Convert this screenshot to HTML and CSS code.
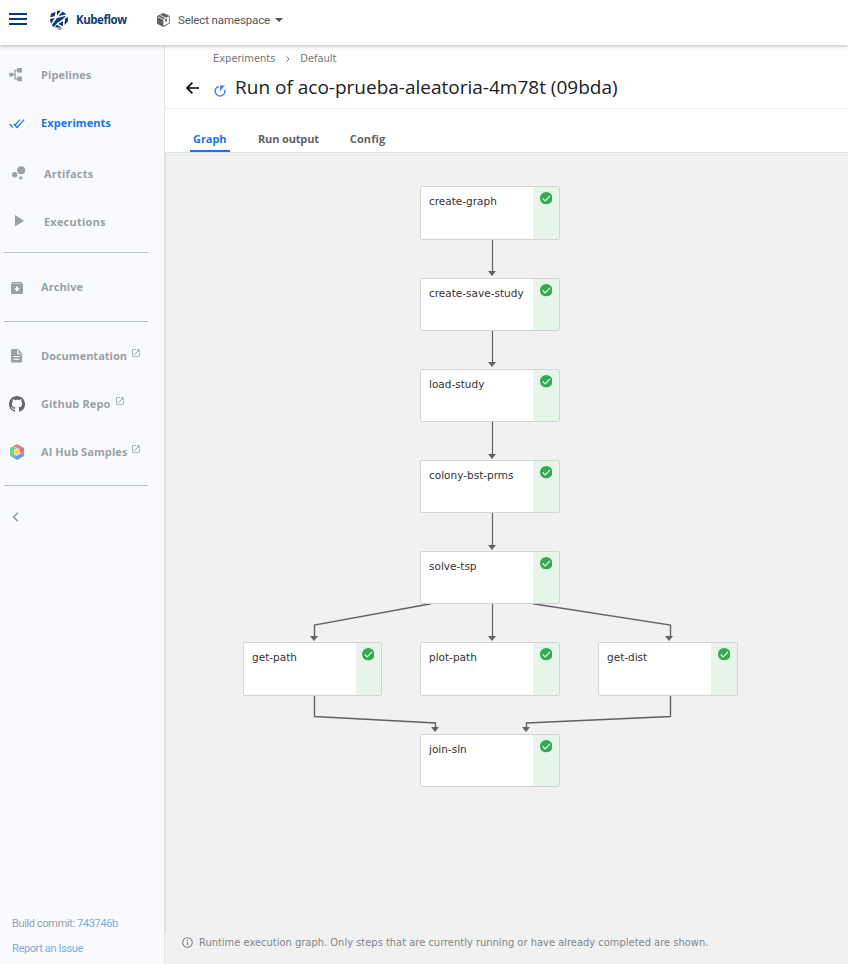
FILE: index.html
```html
<!DOCTYPE html>
<html lang="en">
<head>
<meta charset="utf-8">
<title>Kubeflow Pipelines</title>
<link rel="stylesheet" href="styles.css">
</head>
<body>
<svg class="defs" width="0" height="0">
  <symbol id="check" viewBox="0 0 12 12"><circle cx="6" cy="6" r="6" fill="#34a853"/><path d="M2.6 6.2 5 8.5 9.6 3.7" fill="none" stroke="#e6f4ea" stroke-width="1.2"/></symbol>
  <symbol id="open" viewBox="0 0 24 24"><path fill="currentColor" d="M19 19H5V5h7V3H3v18h18v-9h-2v7zM14 3v2h3.6l-9.800 9.800 1.400 1.400L19 6.400V10h2V3h-7z"/></symbol>
</svg>
<header class="topbar">
  <svg class="menu" width="18" height="12" viewBox="0 0 18 12"><path d="M0 1h18M0 6h18M0 11h18" stroke="#073c78" stroke-width="1.8"/></svg>
  <svg class="logo" width="20" height="20" viewBox="0 0 20 20" fill="#0b3d78"><path d="M2 3.800 6.500 1.700 5.800 6 1.200 7.500zM8 .7 12 .5 8 5.500zM13.500 1.500 17.500 4.200 9.500 6.200zM.5 9.500 5.800 7.800 2.200 13.800zM8 8 17.200 5.800 13.500 9.500 8.500 12.700 4.800 17 2.800 15.200zM16 8.500 18.800 7 19 11.500 15.500 15zM9.300 14 14 11v5.200zM7.500 14.800 12.800 17.500 6 17.500zM8 18.500H13.500L10.500 19.700z"/></svg>
  <span class="brand">Kubeflow</span>
  <svg class="cube" width="13" height="14" viewBox="0 0 13 14"><path fill="#616161" d="M6.300 0 12.700 3v7.600L6.500 14 0 10.700V3z"/><path d="M6.400 6.700 11.900 4v6.100l-5.500 2.900z" fill="#fff"/><path d="M.8 3.600 6.400 6.500 12 3.600M3.200 2.200l5.800 3" fill="none" stroke="#fff" stroke-width=".8"/><path d="M8 6.500 10 5.400v2.700l-2 1z" fill="#616161"/></svg>
  <span class="ns">Select namespace</span>
  <i class="caret"></i>
</header>
<div class="shell">
  <nav class="side">
    <a class="item"><svg width="14" height="14" viewBox="0 0 14 14"><g fill="#9aa0a6"><circle cx="2.200" cy="6.600" r="2.200"/><path d="M8.200 0H13v4.600H8.200zM8.200 8.600H13v4.600H8.200z"/></g><path d="M3 6.600h3M9 2.300H6v8.600h3" fill="none" stroke="#9aa0a6" stroke-width="1.300"/></svg><span>Pipelines</span></a>
    <a class="item on"><svg width="16" height="10" viewBox="0 0 16 10"><path d="M.6 5 4 8.600M4.800 5 8 8.500 15.200.7M11 .7 6.200 5.800" fill="none" stroke="#1a73e8" stroke-width="1.200"/></svg><span>Experiments</span></a>
    <a class="item in art"><svg width="14" height="14" viewBox="0 0 14 14" fill="#9aa0a6"><circle cx="9.200" cy="4.300" r="4"/><circle cx="2.700" cy="8.800" r="2.700"/><circle cx="8.700" cy="11.900" r="1.600"/></svg><span>Artifacts</span></a>
    <a class="item in exe"><svg width="10" height="12" viewBox="0 0 10 12"><path d="M0 0 9.200 5.700 0 11.400z" fill="#9aa0a6"/></svg><span>Executions</span></a>
    <hr>
    <a class="item arc"><svg width="12" height="12" viewBox="0 0 12 12"><path fill="#9aa0a6" d="M1.500 0h9L12 2v8.600q0 1.400-1.400 1.400H1.400Q0 12 0 10.600V2z"/><path d="M1.500 1.500h9" stroke="#d6d9dc" stroke-width=".7"/><path fill="#fff" d="M5 4.500h2v1.700h2L6 9.400 3 6.200h2z"/></svg><span>Archive</span></a>
    <hr>
    <a class="item doc"><svg width="12" height="14" viewBox="0 0 12 14"><path fill="#9aa0a6" d="M1.400 0H7l4.200 4.200v8q0 1.400-1.400 1.400H1.400Q0 13.600 0 12.200V1.400Q0 0 1.400 0z"/><path d="M6.600 1v3.700h3.700M2.500 7.500h6.200M2.500 10.300h6.200" stroke="#fff" fill="none" stroke-width="1.100"/></svg><span>Documentation</span><svg class="ext"><use href="#open"/></svg></a>
    <a class="item git"><svg width="16" height="16" viewBox="0 0 16 16"><path fill="#666" d="M8 0C3.580 0 0 3.580 0 8c0 3.540 2.290 6.530 5.470 7.590.4.070.55-.17.55-.38 0-.19-.01-.82-.01-1.490-2.010.37-2.530-.49-2.690-.94-.09-.23-.48-.94-.82-1.130-.28-.15-.68-.52-.01-.53.63-.01 1.080.58 1.230.82.72 1.210 1.870.87 2.330.66.07-.52.28-.87.51-1.070-1.780-.2-3.640-.89-3.640-3.950 0-.87.31-1.590.82-2.150-.08-.2-.36-1.020.08-2.120 0 0 .67-.21 2.200.82.64-.18 1.320-.27 2-.27s1.360.09 2 .27c1.530-1.040 2.200-.82 2.200-.82.44 1.100.16 1.920.08 2.120.51.56.82 1.270.82 2.150 0 3.070-1.870 3.750-3.650 3.950.29.25.54.73.54 1.480 0 1.070-.01 1.930-.01 2.200 0 .21.15.46.55.38A8.010 8.010 0 0 0 16 8c0-4.420-3.580-8-8-8z"/></svg><span>Github Repo</span><svg class="ext"><use href="#open"/></svg></a>
    <a class="item hub"><svg width="14" height="16" viewBox="0 0 14 16"><path fill="#ee8080" d="M2.500 2.500 7 0l7 4v4l-4-2-3-2z"/><path fill="#7bc796" d="M2.500 2.500 7 4.500 4 6v4l3 2-3 2L0 12V4z"/><path fill="#669df6" d="M14 8v4l-7 4-4-2.400 4-2 3-1.600z"/><path fill="#ee6767" d="m9.500 5 4.500-.8V8l-3.500 1.500z"/><path fill="#fcd766" d="m7 4.800 2.800 1.600v3.200L7 11.200 4.200 9.600V6.400z"/></svg><span>AI Hub Samples</span><svg class="ext"><use href="#open"/></svg></a>
    <hr class="last">
    <svg class="collapse" width="7" height="10" viewBox="0 0 7 10"><path d="M5.800.8 1.600 5l4.200 4.200" fill="none" stroke="#8d9297" stroke-width="1.500"/></svg>
    <div class="build"><p>Build commit: <a>743746b</a></p><p><a>Report an Issue</a></p></div>
  </nav>
  <main>
    <div class="crumbs"><span>Experiments</span><svg width="4" height="6" viewBox="0 0 4 6"><path d="m.6.5 2.500 2.500L.6 5.500" fill="none" stroke="#757575"/></svg><span>Default</span></div>
    <div class="title">
      <svg class="back" width="13" height="12" viewBox="0 0 13 12"><path d="M13 6H1.200M6.400.6 1 6l5.400 5.400" fill="none" stroke="#000" stroke-width="1.600"/></svg>
      <svg class="spin" width="12" height="12" viewBox="0 0 12 12"><path d="M4.600 1.500A4.800 4.800 0 1 0 10.700 5" fill="none" stroke="#4285f4" stroke-width="1.600"/><path d="M6 .6h5L9.300 2.300 7.300 4.600v1.200H6z" fill="#4285f4"/></svg>
      <h1>Run of aco-prueba-aleatoria-4m78t (09bda)</h1>
    </div>
    <div class="tabs"><a class="active"><span>Graph</span></a><a><span>Run output</span></a><a class="cfg"><span>Config</span></a></div>
    <section class="canvas">
      <svg class="edges" width="683" height="811" viewBox="165 153 683 811">
        <g fill="none" stroke="#5f6368" stroke-width="1.200">
          <path d="M492.500 240v33M492.500 331v33M492.500 422v33M492.500 513v33M492.500 604v34"/>
          <path d="M431 603.700 314.500 625v13M533 603.700 670.500 625v13M314.500 696v20.500L435.500 723v5M670.500 696v20.500L526.500 723v5" stroke-width="1.400"/>
        </g>
        <path fill="#5f6368" d="M488 271h8l-4 5zM488 362h8l-4 5zM488 454h8l-4 5zM488 545h8l-4 5zM488 636h8l-4 5zM310 636h8l-4 5zM665 636h8l-4 5zM431 727h8l-4 5zM522 727h8l-4 5z"/>
      </svg>
      <div class="node n1"><span>create-graph</span><i><svg><use href="#check"/></svg></i></div>
      <div class="node n2"><span>create-save-study</span><i><svg><use href="#check"/></svg></i></div>
      <div class="node n3"><span>load-study</span><i><svg><use href="#check"/></svg></i></div>
      <div class="node n4"><span>colony-bst-prms</span><i><svg><use href="#check"/></svg></i></div>
      <div class="node n5"><span>solve-tsp</span><i><svg><use href="#check"/></svg></i></div>
      <div class="node n6"><span>get-path</span><i><svg><use href="#check"/></svg></i></div>
      <div class="node n7"><span>plot-path</span><i><svg><use href="#check"/></svg></i></div>
      <div class="node n8"><span>get-dist</span><i><svg><use href="#check"/></svg></i></div>
      <div class="node n9"><span>join-sln</span><i><svg><use href="#check"/></svg></i></div>
      <div class="note"><svg width="11" height="11" viewBox="0 0 11 11"><circle cx="5.500" cy="5.500" r="4.800" fill="none" stroke="#80868b" stroke-width="1.100"/><path d="M5.500 2.700v1.200M5.500 4.900v3.400" stroke="#80868b" stroke-width="1.200"/></svg><span>Runtime execution graph. Only steps that are currently running or have already completed are shown.</span></div>
    </section>
  </main>
</div>
</body>
</html>
```
FILE: styles.css
```css
* { box-sizing: border-box; }
body { margin: 0; width: 848px; height: 964px; overflow: hidden; background: #fff; font-family: "DejaVu Sans", sans-serif; font-size: 11px; }
.defs { position: absolute; }
svg { display: block; flex: none; }
span, h1, p { white-space: nowrap; }
.topbar { position: relative; z-index: 2; height: 45px; display: flex; align-items: center; padding: 0 0 5px 9px; background: #fff; box-shadow: 0 1px 4px rgba(0,0,0,.28); }
.menu { margin-right: 22px; margin-top: -2px; }
.logo { margin-right: 7px; }
.brand { width: 81px; font: 700 11.5px/16px "Open Sans", sans-serif; color: #0b3d78; letter-spacing: -.45px; }
.cube { margin-right: 8px; }
.ns { width: 97px; font: 11.5px/16px Roboto, sans-serif; color: #555; letter-spacing: -.12px; }
.caret { border: 4px solid transparent; border-top-color: #555; border-bottom: 0; }
.shell { display: flex; height: 919px; }
.side { width: 165px; display: flex; flex-direction: column; background: #f8fafd; border-right: 1px solid #e3e5e8; padding-top: 6px; }
.item { height: 48px; display: flex; align-items: center; padding-left: 9px; color: #9aa0a6; font: 700 11px/16px "Open Sans", sans-serif; }
.item > svg:first-child { margin-right: 18px; }
.item > span { letter-spacing: .08px; }
.item.on { color: #1a73e8; }
.item.on > svg:first-child { margin-right: 16px; margin-top: 2px; }
.item.in { padding-left: 12px; }
.item.in > span { letter-spacing: .2px; }
.item.art { margin-top: 3px; }
.item.art > svg:first-child { margin-top: -2px; }
.item.exe { padding-left: 15px; }
.item.exe > svg:first-child { margin-right: 19px; margin-top: -3px; }
.item.arc, .item.doc { padding-left: 11px; }
.item.arc > svg:first-child { margin-top: 2px; }
.item.doc > span { letter-spacing: 0; }
.item.hub { padding-left: 10px; }
.item.git > svg:first-child { margin-right: 16px; }
.item.git > span { letter-spacing: .15px; }
.item.hub > svg:first-child { margin-right: 17px; }
.item .ext { width: 10px; height: 10px; margin: -7px 0 0 4px; }
.side hr { width: 144px; height: 1px; margin: 6px 0 10px 4px; border: 0; background: #bdc1c6; }
.side .arc + hr { margin-top: 10px; }
.side hr.last { margin-top: 9px; }
.collapse { margin: 16px 0 0 12px; }
.build { margin-top: auto; padding: 0 0 7px 12px; font: 11px/16px Roboto, sans-serif; letter-spacing: -.36px; color: #9aa0a6; }
.build p { margin: 9px 0 0; }
.build a { color: #7baae0; }
main { flex: 1; display: flex; flex-direction: column; }
.crumbs { height: 27px; display: flex; align-items: center; padding-left: 48px; font-family: "DejaVu Sans Condensed", "DejaVu Sans", sans-serif; font-stretch: condensed; color: #757575; }
.crumbs svg { margin: 1px 10px 0 11px; }
.title { height: 37px; display: flex; align-items: center; padding: 0 0 5px 21px; border-bottom: 1px solid #eee; }
.spin { margin: 6px 9px 0 15px; }
.title h1 { margin: -2px 0 0; font: 400 19px/26px "Open Sans", sans-serif; color: #202124; }
.tabs { height: 44px; display: flex; align-items: flex-end; padding-left: 25px; gap: 28px; border-bottom: 1px solid #e0e0e0; font: 700 11px/16px "Open Sans", sans-serif; color: #5f6368; }
.tabs a { height: 21px; letter-spacing: -.15px; }
.tabs a.cfg { margin-left: 3px; letter-spacing: .08px; }
.tabs a.active { width: 40px; padding-left: 3px; letter-spacing: -.05px; color: #1a73e8; border-bottom: 2px solid #1a73e8; border-radius: 2px 2px 0 0; }
.canvas { position: relative; flex: 1; background: #f1f1f1; }
.canvas::before { content: ""; position: absolute; left: 0; top: 0; width: 1px; height: 780px; background: #ddd; }
.edges { position: absolute; left: 0; top: 0; }
.node { position: absolute; width: 140px; height: 53px; display: flex; justify-content: space-between; background: #fff; border: 1px solid #d4d4d4; border-radius: 2px; font-size: 10.5px; color: #333; }
.node span { padding: 6px 0 0 8px; line-height: 16px; }
.node i { width: 26px; background: #e6f4ea; padding: 5px 0 0 6.5px; }
.node i svg { width: 12.5px; height: 12.5px; }
.n1 { left: 255px; top: 33px; height: 54px; }
.n2 { left: 255px; top: 125px; }
.n3 { left: 255px; top: 216px; }
.n4 { left: 255px; top: 307px; }
.n5 { left: 255px; top: 398px; }
.n6 { left: 78px; top: 489px; width: 139px; height: 54px; }
.n7 { left: 255px; top: 489px; height: 54px; }
.n8 { left: 433px; top: 489px; height: 54px; }
.n9 { left: 255px; top: 581px; }
.n6 i { width: 25px; padding-left: 5.5px; }
.note { position: absolute; left: 17px; bottom: 13px; display: flex; align-items: center; gap: 6px; font-family: "DejaVu Sans Condensed", "DejaVu Sans", sans-serif; font-stretch: condensed; line-height: 16px; letter-spacing: .012px; color: #80868b; }
.note svg { margin-top: -1px; }
```
